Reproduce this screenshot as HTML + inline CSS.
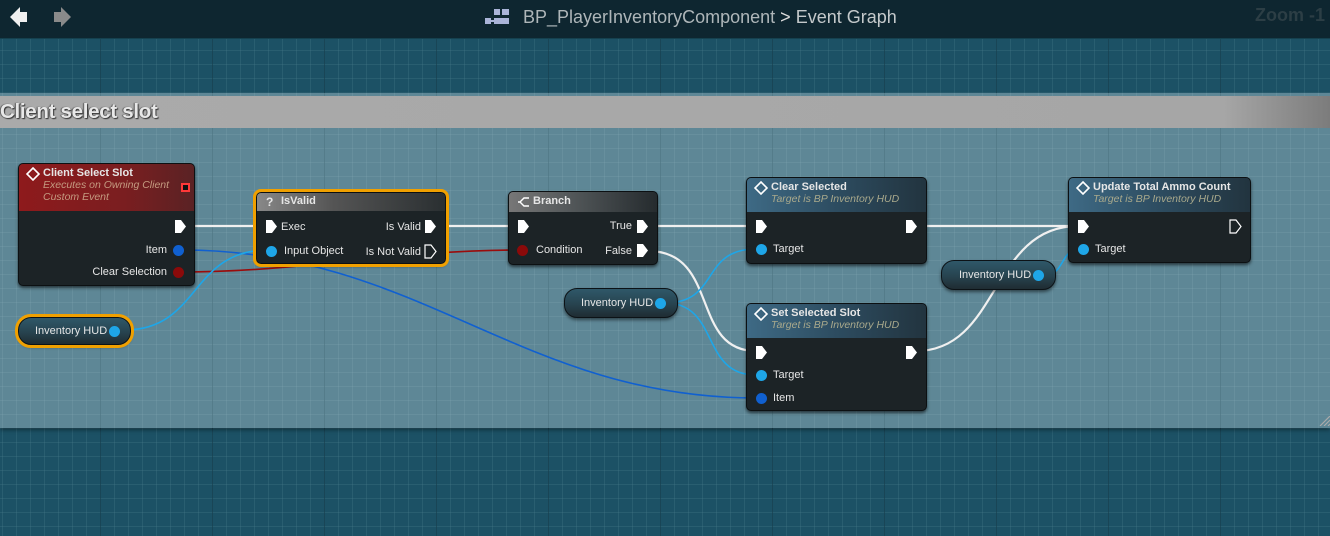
<!DOCTYPE html>
<html><head><meta charset="utf-8"><style>
*{margin:0;padding:0;box-sizing:border-box}
body{width:1330px;height:536px;overflow:hidden;position:relative;font-family:"Liberation Sans",sans-serif;background:#1c5165}
.grid{position:absolute;left:0;top:0;width:1330px;height:536px;
background-image:
linear-gradient(90deg,rgba(10,45,60,.5) 1px,transparent 1px),
linear-gradient(90deg,rgba(80,130,145,.25) 1px,transparent 1px),
linear-gradient(rgba(80,130,145,.25) 1px,transparent 1px);
background-size:112px 100%,14px 14px,14px 14px;
background-position:100px 0,2px 0,0 8px}
.top{position:absolute;left:0;top:0;width:1330px;height:39px;background:#0e2630;border-bottom:1px solid #15414f}
.comment{position:absolute;left:0;top:93px;width:1330px;height:335px;background:#5e8796;box-shadow:0 2px 4px rgba(0,0,0,.4)}
.comment .g{position:absolute;inset:0;background-image:
linear-gradient(90deg,rgba(60,100,115,.45) 1px,transparent 1px),
linear-gradient(90deg,rgba(140,175,185,.2) 1px,transparent 1px),
linear-gradient(rgba(140,175,185,.2) 1px,transparent 1px);
background-size:112px 100%,14px 14px,14px 14px;background-position:100px 0,2px 0,0 -1px}
.ch{position:absolute;left:0;top:3px;width:1330px;height:32px;background:linear-gradient(90deg,#aaa 0,#a6a6a6 92%,#7c7c7c 100%);color:#e8e8e8;font-weight:bold;font-size:20.5px;line-height:32px;text-shadow:1px 1px 1px #333,-1px 0 1px #555;letter-spacing:-.3px}
.node{position:absolute;background:#1c2326;border-radius:5px;box-shadow:0 2px 3px rgba(0,0,0,.6);border:1px solid #0c1012;color:#e6e6e6;font-size:11px}
.hd{position:absolute;left:0;top:0;right:0;border-radius:4px 4px 0 0;padding:3px 0 0 24px;font-weight:bold;font-size:11px}
.sub{font-style:italic;font-weight:normal;color:#a9a98c;font-size:10.5px}
.t{position:absolute;font-size:11px;color:#e6e6e6;white-space:nowrap}
.var{position:absolute;border-radius:13px;background:linear-gradient(#2f5869,#27434f 55%,#1f2c32);border:1px solid #0c1216;box-shadow:0 2px 3px rgba(0,0,0,.5);color:#e6e6e6;font-size:11px;line-height:29px;text-align:left}
.sel{outline:3px solid #f0a000;outline-offset:0}
</style></head><body>
<div class="grid"></div>
<div class="top">
 <svg style="position:absolute;left:6px;top:4px" width="68" height="28"><path d="M4 13 L14 3 L14 8 L21 8 L21 18 L14 18 L14 23 Z" fill="#f0f0f0"/><path d="M65 13 L55 3 L55 8 L48 8 L48 18 L55 18 L55 23 Z" fill="#8a8a8a"/></svg>
 <svg style="position:absolute;left:485px;top:9px" width="26" height="18"><rect x="0" y="9" width="6" height="6" fill="#aab4d8"/><rect x="9" y="0" width="6" height="6" fill="#aab4d8"/><rect x="9" y="9" width="15" height="6" fill="#aab4d8"/><rect x="17" y="0" width="7" height="6" fill="#aab4d8"/><rect x="6" y="11" width="3" height="2" fill="#aab4d8"/></svg>
 <div style="position:absolute;left:523px;top:7px;font-size:18px;color:#aeb6b9">BP_PlayerInventoryComponent <span style="color:#ddd">&gt;</span> <span style="color:#c4c9cb">Event Graph</span></div>
 <div style="position:absolute;left:1255px;top:5px;font-size:18px;font-weight:bold;color:#2c3e45">Zoom -1</div>
</div>
<div class="comment"><div class="g"></div><div class="ch">Client select slot</div>
<svg style="position:absolute;right:0;bottom:2px" width="12" height="10"><path d="M2 10 L12 0 M6 10 L12 4 M10 10 L12 8" stroke="#aaa" stroke-width="1.2"/></svg></div>

<svg width="1330" height="536" style="position:absolute;left:0;top:0;z-index:1" fill="none">
<g stroke="#f0f0f0" stroke-width="2.2">
<path d="M185 226 L264 226"/><path d="M436 226 L516 226"/><path d="M648 226 L756 226"/><path d="M916 226 L1078 226"/>
<path d="M648 251 C720 251,690 351,756 351"/>
<path d="M916 351 C1000 351,990 226,1078 226"/>
</g>
<path d="M182 250 C420 250,520 398,756 398" stroke="#1060d0" stroke-width="1.6"/>
<path d="M182 272 C300 272,400 250,516 250" stroke="#9a0c0c" stroke-width="1.6"/>
<path d="M125 330 C200 330,190 250,268 250" stroke="#1ea6e8" stroke-width="1.6"/>
<path d="M665 303 C720 303,700 249,756 249" stroke="#1ea6e8" stroke-width="1.6"/>
<path d="M665 303 C720 303,700 375,756 375" stroke="#1ea6e8" stroke-width="1.6"/>
<path d="M1045 275 C1065 275,1060 249,1080 249" stroke="#1ea6e8" stroke-width="1.6"/>
</svg>

<div style="position:absolute;left:0;top:0;z-index:2">
<div class="node" style="left:18px;top:163px;width:177px;height:123px">
 <div class="hd" style="height:47px;background:linear-gradient(90deg,#8e1a1c,#7a1e20 60%,#5a2224)">Client Select Slot<br><span class="sub" style="color:#c49a80">Executes on Owning Client<br>Custom Event</span></div>
 <svg style="position:absolute;left:7px;top:3px" width="14" height="14"><path d="M7 1 L13 7 L7 13 L1 7 Z" stroke="#fff" stroke-width="1.6" fill="none"/></svg>
 <div style="position:absolute;left:162px;top:19px;width:9px;height:9px;border:2px solid #ff3838;background:#111"></div>
 <svg style="position:absolute;left:155px;top:55px" width="13" height="15"><path d="M1 1 H7 L12 7.5 L7 14 H1 Z" fill="#fff"/></svg>
 <div class="t" style="right:27px;top:80px">Item</div><div style="position:absolute;left:154px;top:81px;width:11px;height:11px;border-radius:50%;background:#1060d0"></div>
 <div class="t" style="right:27px;top:102px">Clear Selection</div><div style="position:absolute;left:154px;top:103px;width:11px;height:11px;border-radius:50%;background:#8b0a0a"></div>
</div>
<div class="node sel" style="left:256px;top:192px;width:190px;height:72px;border-radius:5px">
 <div class="hd" style="height:18px;padding:2px 0 0 24px;background:linear-gradient(90deg,#888,#555 40%,#2a2f31)">IsValid</div>
 <div class="t" style="left:9px;top:2px;font-weight:bold;font-size:12px">?</div>
 <svg style="position:absolute;left:8px;top:26px" width="13" height="15"><path d="M1 1 H7 L12 7.5 L7 14 H1 Z" fill="#fff"/></svg>
 <div class="t" style="left:24px;top:28px">Exec</div>
 <div class="t" style="right:24px;top:28px">Is Valid</div>
 <svg style="position:absolute;right:8px;top:26px" width="13" height="15"><path d="M1 1 H7 L12 7.5 L7 14 H1 Z" fill="#fff"/></svg>
 <div style="position:absolute;left:9px;top:53px;width:11px;height:11px;border-radius:50%;background:#1ea6e8"></div>
 <div class="t" style="left:27px;top:52px">Input Object</div>
 <div class="t" style="right:24px;top:53px">Is Not Valid</div>
 <svg style="position:absolute;right:8px;top:51px" width="13" height="15"><path d="M1 1 H7 L12 7.5 L7 14 H1 Z" stroke="#fff" stroke-width="1.2" fill="none"/></svg>
</div>
<div class="node" style="left:508px;top:191px;width:150px;height:74px">
 <div class="hd" style="height:20px;background:linear-gradient(90deg,#777,#505557 45%,#252b2e)">Branch</div>
 <svg style="position:absolute;left:8px;top:4px" width="14" height="12"><path d="M12 2 H7 L3 6 L7 10 H12 M3 6 H1" stroke="#fff" stroke-width="1.4" fill="none"/></svg>
 <svg style="position:absolute;left:8px;top:27px" width="13" height="15"><path d="M1 1 H7 L12 7.5 L7 14 H1 Z" fill="#fff"/></svg>
 <div class="t" style="right:25px;top:28px">True</div>
 <svg style="position:absolute;right:8px;top:27px" width="13" height="15"><path d="M1 1 H7 L12 7.5 L7 14 H1 Z" fill="#fff"/></svg>
 <div style="position:absolute;left:8px;top:53px;width:11px;height:11px;border-radius:50%;background:#8b0a0a"></div>
 <div class="t" style="left:27px;top:52px">Condition</div>
 <div class="t" style="right:25px;top:53px">False</div>
 <svg style="position:absolute;right:8px;top:51px" width="13" height="15"><path d="M1 1 H7 L12 7.5 L7 14 H1 Z" fill="#fff"/></svg>
</div>
<div class="node" style="left:746px;top:177px;width:181px;height:87px">
 <div class="hd" style="height:34px;background:linear-gradient(90deg,#3e6a85,#2d4c60 50%,#22343f)">Clear Selected<br><span class="sub">Target is BP Inventory HUD</span></div>
 <svg style="position:absolute;left:7px;top:3px" width="14" height="14"><path d="M7 1 L13 7 L7 13 L1 7 Z" stroke="#fff" stroke-width="1.6" fill="none"/></svg>
 <svg style="position:absolute;left:8px;top:41px" width="13" height="15"><path d="M1 1 H7 L12 7.5 L7 14 H1 Z" fill="#fff"/></svg>
 <svg style="position:absolute;right:8px;top:41px" width="13" height="15"><path d="M1 1 H7 L12 7.5 L7 14 H1 Z" fill="#fff"/></svg>
 <div style="position:absolute;left:9px;top:66px;width:11px;height:11px;border-radius:50%;background:#1ea6e8"></div>
 <div class="t" style="left:26px;top:65px">Target</div>
</div>
<div class="node" style="left:746px;top:303px;width:181px;height:108px">
 <div class="hd" style="height:34px;background:linear-gradient(90deg,#3e6a85,#2d4c60 50%,#22343f)">Set Selected Slot<br><span class="sub">Target is BP Inventory HUD</span></div>
 <svg style="position:absolute;left:7px;top:3px" width="14" height="14"><path d="M7 1 L13 7 L7 13 L1 7 Z" stroke="#fff" stroke-width="1.6" fill="none"/></svg>
 <svg style="position:absolute;left:8px;top:41px" width="13" height="15"><path d="M1 1 H7 L12 7.5 L7 14 H1 Z" fill="#fff"/></svg>
 <svg style="position:absolute;right:8px;top:41px" width="13" height="15"><path d="M1 1 H7 L12 7.5 L7 14 H1 Z" fill="#fff"/></svg>
 <div style="position:absolute;left:9px;top:66px;width:11px;height:11px;border-radius:50%;background:#1ea6e8"></div>
 <div class="t" style="left:26px;top:65px">Target</div>
 <div style="position:absolute;left:9px;top:89px;width:11px;height:11px;border-radius:50%;background:#1060d0"></div>
 <div class="t" style="left:26px;top:88px">Item</div>
</div>
<div class="node" style="left:1068px;top:177px;width:183px;height:86px">
 <div class="hd" style="height:34px;background:linear-gradient(90deg,#3e6a85,#2d4c60 50%,#22343f)">Update Total Ammo Count<br><span class="sub">Target is BP Inventory HUD</span></div>
 <svg style="position:absolute;left:7px;top:3px" width="14" height="14"><path d="M7 1 L13 7 L7 13 L1 7 Z" stroke="#fff" stroke-width="1.6" fill="none"/></svg>
 <svg style="position:absolute;left:8px;top:41px" width="13" height="15"><path d="M1 1 H7 L12 7.5 L7 14 H1 Z" fill="#fff"/></svg>
 <svg style="position:absolute;right:8px;top:41px" width="13" height="15"><path d="M1 1 H7 L12 7.5 L7 14 H1 Z" stroke="#fff" stroke-width="1.2" fill="none"/></svg>
 <div style="position:absolute;left:9px;top:66px;width:11px;height:11px;border-radius:50%;background:#1ea6e8"></div>
 <div class="t" style="left:26px;top:65px">Target</div>
</div>
<div class="var" style="left:18px;top:317px;width:113px;height:28px;outline:3px solid #f0a000;border-radius:13px;line-height:26px;padding-left:16px">Inventory HUD<span style="position:absolute;left:90px;top:8px;width:11px;height:11px;border-radius:50%;background:#1ea6e8"></span></div>
<div class="var" style="left:564px;top:288px;width:114px;height:30px;padding-left:16px">Inventory HUD<span style="position:absolute;left:90px;top:9px;width:11px;height:11px;border-radius:50%;background:#1ea6e8"></span></div>
<div class="var" style="left:941px;top:260px;width:115px;height:30px;padding-left:17px">Inventory HUD<span style="position:absolute;left:91px;top:9px;width:11px;height:11px;border-radius:50%;background:#1ea6e8"></span></div>
</div>
</body></html>
